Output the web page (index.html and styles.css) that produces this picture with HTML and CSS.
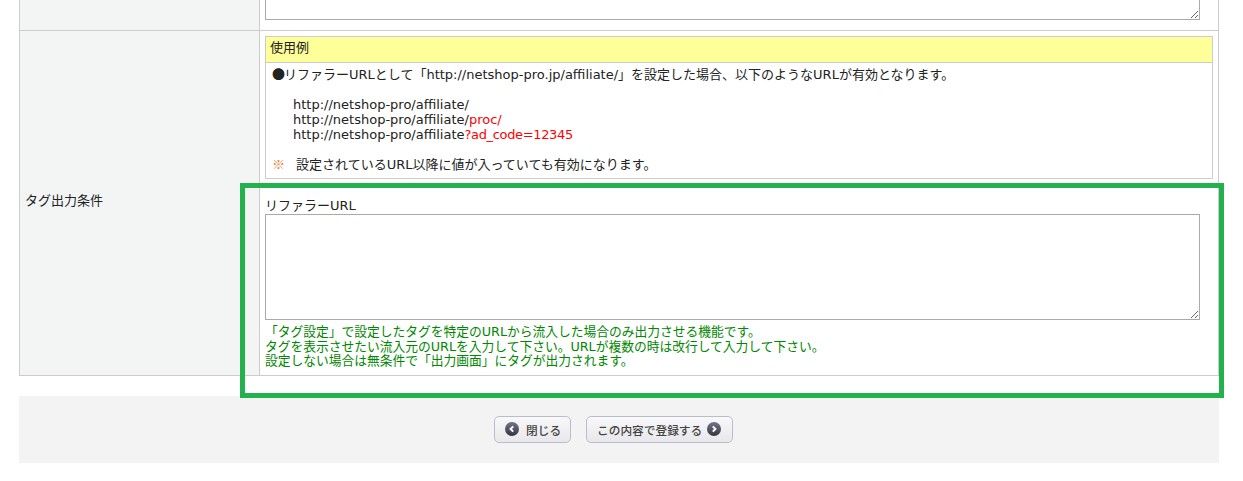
FILE: index.html
```html
<!DOCTYPE html>
<html lang="ja">
<head>
<meta charset="utf-8">
<title>タグ出力条件</title>
<link rel="stylesheet" href="styles.css">
</head>
<body>
<div class="page">
  <div class="form-table">
    <div class="row row-cut">
      <div class="label"></div>
      <div class="value value-cut"><textarea class="field field-cut"></textarea></div>
    </div>
    <div class="row">
      <div class="label label-main">タグ出力条件</div>
      <div class="value">
        <div class="example">
          <div class="example-head">使用例</div>
          <div class="example-body">
            <p><span class="bullet cjk">●</span>リファラーURLとして「http://netshop-pro.jp/affiliate/」を設定した場合、以下のようなURLが有効となります。</p>
            <p class="blank">&nbsp;</p>
            <p class="indent">http://netshop-pro/affiliate/</p>
            <p class="indent">http://netshop-pro/affiliate/<span class="red">proc/</span></p>
            <p class="indent">http://netshop-pro/affiliate<span class="red tight">?ad_code=12345</span></p>
            <p class="blank">&nbsp;</p>
            <p><span class="mark cjk">※</span><span class="note">設定されているURL以降に値が入っていても有効になります。</span></p>
          </div>
        </div>
        <div class="field-title">リファラーURL</div>
        <textarea class="field field-main"></textarea>
        <div class="help">
          <p>「タグ設定」で設定したタグを特定のURLから流入した場合のみ出力させる機能です。</p>
          <p>タグを表示させたい流入元のURLを入力して下さい。URLが複数の時は改行して入力して下さい。</p>
          <p>設定しない場合は無条件で「出力画面」にタグが出力されます。</p>
        </div>
      </div>
    </div>
  </div>
  <div class="actions">
    <button class="btn btn-back" type="button"><svg class="ico" viewBox="0 0 14 14"><defs><linearGradient id="g1" x1="0" y1="0" x2="0" y2="1"><stop offset="0" stop-color="#75758a"/><stop offset="1" stop-color="#35353f"/></linearGradient></defs><circle cx="7" cy="7" r="7" fill="url(#g1)"/><path d="M8.2 4.4 5.6 7l2.6 2.6" fill="none" stroke="#fff" stroke-width="2"/></svg><span>閉じる</span></button>
    <button class="btn btn-next" type="button"><span>この内容で登録する</span><svg class="ico" viewBox="0 0 14 14"><defs><linearGradient id="g2" x1="0" y1="0" x2="0" y2="1"><stop offset="0" stop-color="#75758a"/><stop offset="1" stop-color="#35353f"/></linearGradient></defs><circle cx="7" cy="7" r="7" fill="url(#g2)"/><path d="M5.8 4.4 8.4 7l-2.6 2.6" fill="none" stroke="#fff" stroke-width="2"/></svg></button>
  </div>
  <div class="highlight"></div>
</div>
</body>
</html>
```

FILE: styles.css
```css
* { box-sizing: border-box; }
html, body { margin: 0; padding: 0; background: #fff; overflow: hidden; }
body {
  font-family: "DejaVu Sans", "Noto Sans CJK JP", sans-serif;
  font-size: 13px;
  line-height: 15px;
  color: #222;
}
p { margin: 0; }
.page { position: relative; width: 1243px; height: 481px; padding: 0 24px 0 19px; }
.form-table {
  width: 1200px;
  border-left: 1px solid #ccc;
  border-right: 1px solid #ccc;
  border-bottom: 1px solid #ccc;
}
.row { display: grid; grid-template-columns: 240px 1fr; }
.row-cut { height: 31px; grid-template-rows: 30px; border-bottom: 1px solid #ccc; overflow: hidden; }
.label { background: #f3f5f5; border-right: 1px solid #ccc; }
.label-main { display: flex; align-items: center; padding: 0 0 5px 5px; }
.value { padding: 5px; min-width: 0; }
.value-cut { display: flex; align-items: flex-end; height: 30px; padding: 0 0 10px 5px; }
.field {
  display: block;
  width: 935px;
  border: 1px solid #aaa;
  background: #fff;
  margin: 0;
  padding: 2px;
  font: inherit;
}
.field-cut { height: 60px; flex: none; }
.field-main { height: 106px; }
.example { border: 1px solid #ccc; width: 948px; height: 143px; }
.example-head { background: #ff9; border-bottom: 1px solid #ccc; height: 26px; padding: 3px 4px 0; }
.example-body { padding: 4px 5px 0; }
.cjk { font-family: "Noto Sans CJK JP", sans-serif; line-height: 0; }
.bullet { margin-left: 1px; margin-right: -1px; }
.indent { padding-left: 22px; }
.red { color: #f00; }
.tight { letter-spacing: -0.35px; }
.mark { color: #e8873a; margin-left: 1px; margin-right: 11px; }
.field-title { margin-top: 17px; height: 18px; padding-top: 2px; }
.help { color: #080; margin-top: 5px; font-size: 12.75px; line-height: 14.5px; padding-bottom: 1px; }
.actions {
  margin-top: 20px;
  width: 1200px;
  height: 67px;
  padding-right: 11px;
  background: #f3f3f3;
  display: flex;
  justify-content: center;
  align-items: center;
  gap: 15px;
}
.btn {
  display: flex;
  align-items: center;
  height: 27px;
  border: 1px solid #bcbccf;
  border-radius: 5px;
  background: linear-gradient(#f8f8f9, #e8e8ec);
  color: #444;
  font: 500 11.7px/15px "Noto Sans CJK JP", sans-serif;
}
.btn-back { width: 77px; padding: 0 0 0 10px; gap: 7px; }
.btn-next { width: 147px; padding: 0 0 0 10px; gap: 5px; }
.ico { width: 14px; height: 14px; flex: none; }
.highlight {
  position: absolute;
  left: 240px;
  top: 183px;
  width: 984px;
  height: 215px;
  border: 5px solid #22b14c;
  pointer-events: none;
}
```
